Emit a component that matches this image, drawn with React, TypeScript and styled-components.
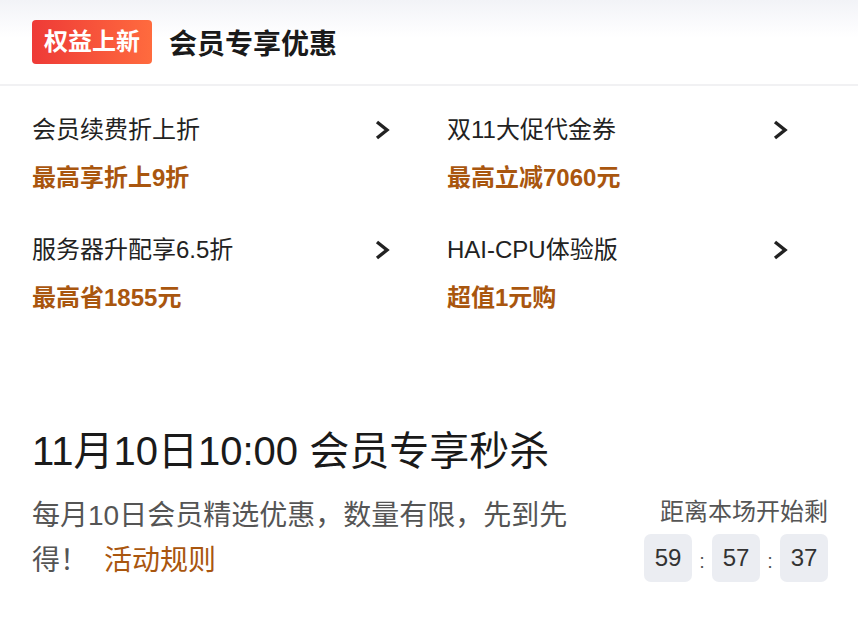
import React from "react";
import styled, { createGlobalStyle } from "styled-components";

const GlobalStyle = createGlobalStyle`
  body {
    margin: 0;
    background: #fff;
    font-family: "Liberation Sans", "Noto Sans CJK SC", sans-serif;
  }
`;

const Page = styled.div`
  width: 858px;
  min-height: 618px;
  background: #fff;
`;

const Header = styled.header`
  height: 84px;
  display: flex;
  align-items: center;
  gap: 17px;
  padding: 0 32px;
  background: linear-gradient(180deg, #f2f3f7 0%, #fbfbfd 30%, #ffffff 45%);
  border-bottom: 2px solid #f1f1f3;
`;

const Badge = styled.span`
  height: 44px;
  line-height: 44px;
  padding: 0 12px;
  border-radius: 4px;
  background: linear-gradient(90deg, #ee3a37 0%, #ff6b3e 100%);
  color: #fff;
  font-size: 24px;
  font-weight: 700;
`;

const HeaderTitle = styled.h1`
  margin: 0;
  font-size: 28px;
  font-weight: 700;
  color: #1a1a1a;
`;

const OfferGrid = styled.div`
  display: grid;
  grid-template-columns: 358px 341px;
  column-gap: 57px;
  row-gap: 36px;
  padding: 26px 32px 0;
`;

const Offer = styled.div`
  display: flex;
  flex-direction: column;
  gap: 12px;
`;

const OfferHead = styled.div`
  display: flex;
  align-items: center;
  justify-content: space-between;
  height: 36px;
`;

const OfferName = styled.span`
  font-size: 24px;
  line-height: 36px;
  color: #222;
`;

const OfferDeal = styled.span`
  font-size: 24px;
  line-height: 36px;
  font-weight: 700;
  color: #a9560e;
`;

const Flash = styled.section`
  margin-top: 111px;
  padding: 0 30px 0 32px;
`;

const FlashTitle = styled.h2`
  margin: 0;
  font-size: 40px;
  line-height: 48px;
  font-weight: 400;
  color: #1a1a1a;
`;

const FlashRow = styled.div`
  display: flex;
  justify-content: space-between;
  align-items: flex-start;
  margin-top: 18px;
`;

const Desc = styled.p`
  margin: 0;
  width: 550px;
  font-size: 28px;
  line-height: 45px;
  color: #555;
`;

const RuleLink = styled.a`
  margin-left: 16px;
  color: #a9560e;
  text-decoration: none;
`;

const Countdown = styled.div`
  display: flex;
  flex-direction: column;
  align-items: flex-end;
  padding-top: 4px;
`;

const CountLabel = styled.span`
  font-size: 24px;
  line-height: 30px;
  color: #555;
`;

const Timer = styled.div`
  display: flex;
  align-items: center;
  margin-top: 4px;
`;

const TimeBox = styled.span`
  width: 48px;
  height: 48px;
  border-radius: 7px;
  background: #ebedf2;
  display: flex;
  align-items: center;
  justify-content: center;
  font-size: 24px;
  color: #333;
`;

const Colon = styled.span`
  width: 20px;
  text-align: center;
  font-size: 20px;
  line-height: 48px;
  padding-top: 6px;
  color: #555;
`;

const Chevron = () => (
  <svg width="15" height="20" viewBox="0 0 15 20" aria-hidden="true">
    <polyline
      points="2,2 12,10 2,18"
      fill="none"
      stroke="#222"
      strokeWidth="3.4"
      strokeLinejoin="miter"
    />
  </svg>
);

const offers = [
  { name: "会员续费折上折", deal: "最高享折上9折" },
  { name: "双11大促代金券", deal: "最高立减7060元" },
  { name: "服务器升配享6.5折", deal: "最高省1855元" },
  { name: "HAI-CPU体验版", deal: "超值1元购" },
];

export default function App() {
  return (
    <Page>
      <GlobalStyle />
      <Header>
        <Badge>权益上新</Badge>
        <HeaderTitle>会员专享优惠</HeaderTitle>
      </Header>

      <OfferGrid>
        {offers.map((o) => (
          <Offer key={o.name}>
            <OfferHead>
              <OfferName>{o.name}</OfferName>
              <Chevron />
            </OfferHead>
            <OfferDeal>{o.deal}</OfferDeal>
          </Offer>
        ))}
      </OfferGrid>

      <Flash>
        <FlashTitle>11月10日10:00 会员专享秒杀</FlashTitle>
        <FlashRow>
          <Desc>
            每月10日会员精选优惠，数量有限，先到先得！
            <RuleLink href="#">活动规则</RuleLink>
          </Desc>
          <Countdown>
            <CountLabel>距离本场开始剩</CountLabel>
            <Timer>
              <TimeBox>59</TimeBox>
              <Colon>:</Colon>
              <TimeBox>57</TimeBox>
              <Colon>:</Colon>
              <TimeBox>37</TimeBox>
            </Timer>
          </Countdown>
        </FlashRow>
      </Flash>
    </Page>
  );
}
